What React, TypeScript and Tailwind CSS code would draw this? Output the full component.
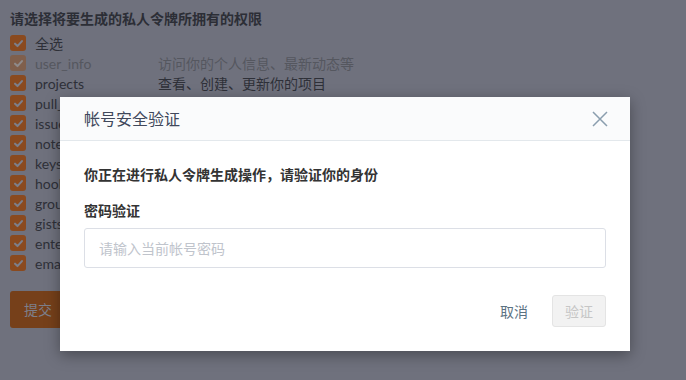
import React from "react";

const rows: { name: string; desc: string; disabled?: boolean }[] = [
  { name: "user_info", desc: "访问你的个人信息、最新动态等", disabled: true },
  { name: "projects", desc: "查看、创建、更新你的项目" },
  { name: "pull_requests", desc: "查看、发布、更新你的 Pull Request" },
  { name: "issues", desc: "查看、发布、更新你的 Issue" },
  { name: "notes", desc: "查看、发布、管理你的评论" },
  { name: "keys", desc: "查看、部署、删除你的公钥" },
  { name: "hook", desc: "查看、部署、更新你的 WebHook" },
  { name: "groups", desc: "查看、管理你的组织以及成员" },
  { name: "gists", desc: "查看、删除、更新你的代码片段" },
  { name: "enterprises", desc: "查看、管理你的企业以及成员" },
  { name: "emails", desc: "查看你的个人邮箱信息" },
];

function Check({ disabled }: { disabled?: boolean }) {
  return (
    <span
      className={
        "flex h-4 w-4 items-center justify-center rounded-[3px] " +
        (disabled ? "bg-[#7f5f4c]" : "bg-[#8a4a1f]")
      }
    >
      <svg width="11" height="11" viewBox="0 0 12 12" fill="none">
        <path
          d="M2.2 6.2 L4.9 8.8 L9.8 3.4"
          stroke={disabled ? "#8f8a8a" : "#7d7f8a"}
          strokeWidth="2.2"
          strokeLinecap="round"
          strokeLinejoin="round"
        />
      </svg>
    </span>
  );
}

export default function App() {
  const font = { fontFamily: 'Lato, "Noto Sans CJK SC", sans-serif' };
  return (
    <div
      className="relative h-[380px] w-[686px] overflow-hidden bg-[#6f717d] text-[#2e3038]"
      style={font}
    >
      <div className="px-[10px] pt-[9px]">
        <div className="text-[14px] font-bold leading-[20px] text-[#2c2e36]">
          请选择将要生成的私人令牌所拥有的权限
        </div>
        <div className="mt-[4px] flex flex-col">
          <label className="flex h-[20px] items-center">
            <Check />
            <span className="ml-[9px] text-[14px]">全选</span>
          </label>
          {rows.map((r) => (
            <label key={r.name} className="flex h-[20px] items-center">
              <Check disabled={r.disabled} />
              <span
                className={
                  "ml-[9px] w-[123px] text-[14px] " +
                  (r.disabled ? "text-[#55575f]" : "text-[#2e3038]")
                }
              >
                {r.name}
              </span>
              <span
                className={
                  "text-[14px] " +
                  (r.disabled ? "text-[#55575f]" : "text-[#2e3038]")
                }
              >
                {r.desc}
              </span>
            </label>
          ))}
        </div>
        <button className="mt-[18px] h-[37px] rounded-[3px] bg-[#76401a] px-[14px] text-[14px] text-[#7d7f8a]">
          提交
        </button>
      </div>

      <div className="absolute left-[60px] top-[97px] flex h-[254px] w-[570px] flex-col bg-white shadow-[0_4px_14px_rgba(0,0,0,0.35)]">
        <div className="flex h-[44px] items-center justify-between border-b border-[#e3e8ec] bg-[#fafbfc] pl-[24px] pr-[22px]">
          <span className="text-[16px] text-[#40485b]">帐号安全验证</span>
          <svg width="16" height="16" viewBox="0 0 16 16" fill="none">
            <path d="M1 1 L15 15 M15 1 L1 15" stroke="#8a9eae" strokeWidth="1.5" />
          </svg>
        </div>
        <div className="px-[24px] pt-[24px]">
          <div className="text-[14px] font-semibold leading-[20px] text-[#333333]">
            你正在进行私人令牌生成操作，请验证你的身份
          </div>
          <div className="mt-[16px] text-[14px] font-semibold leading-[20px] text-[#333333]">
            密码验证
          </div>
          <input
            className="mt-[7px] h-[40px] w-full rounded-[3px] border border-[#dcdfe6] px-[14px] text-[14px] outline-none placeholder:text-[#c0c4cc]"
            placeholder="请输入当前帐号密码"
          />
        </div>
        <div className="mt-auto flex items-center justify-end gap-[24px] px-[24px] pb-[24px]">
          <span className="text-[14px] text-[#5b7282]">取消</span>
          <button className="h-[32px] w-[54px] rounded-[3px] border border-[#e4e4e4] bg-[#f2f2f2] text-[14px] text-[#c6c6c6]">
            验证
          </button>
        </div>
      </div>
    </div>
  );
}
